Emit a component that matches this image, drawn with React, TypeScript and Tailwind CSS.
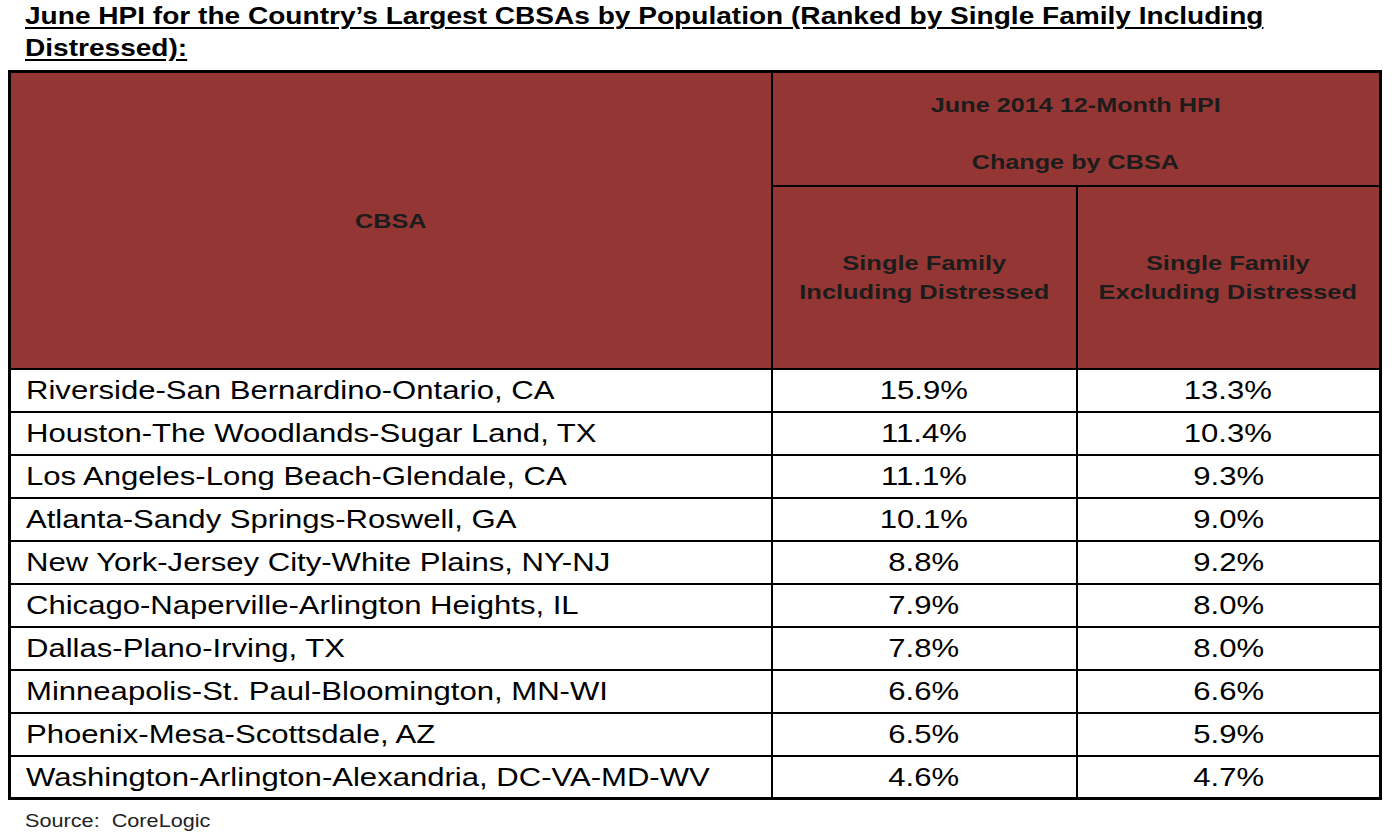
const rows: [string, string, string][] = [
  ['Riverside-San Bernardino-Ontario, CA', '15.9%', '13.3%'],
  ['Houston-The Woodlands-Sugar Land, TX', '11.4%', '10.3%'],
  ['Los Angeles-Long Beach-Glendale, CA', '11.1%', '9.3%'],
  ['Atlanta-Sandy Springs-Roswell, GA', '10.1%', '9.0%'],
  ['New York-Jersey City-White Plains, NY-NJ', '8.8%', '9.2%'],
  ['Chicago-Naperville-Arlington Heights, IL', '7.9%', '8.0%'],
  ['Dallas-Plano-Irving, TX', '7.8%', '8.0%'],
  ['Minneapolis-St. Paul-Bloomington, MN-WI', '6.6%', '6.6%'],
  ['Phoenix-Mesa-Scottsdale, AZ', '6.5%', '5.9%'],
  ['Washington-Arlington-Alexandria, DC-VA-MD-WV', '4.6%', '4.7%'],
];

// the source image is stretched sideways, so text gets a horizontal scale
export default function App() {
  return (
    <div className="w-[1398px] h-[838px] bg-white pl-[8px] font-['Liberation_Sans',Arial,sans-serif] text-black overflow-hidden">
      <h1 className="pl-[17px] text-[23px] leading-[32px] font-bold whitespace-nowrap">
        <span className="inline-block origin-left scale-x-[1.22] underline decoration-2 underline-offset-[3px]">
          June HPI for the Country’s Largest CBSAs by Population (Ranked by Single Family Including
          <br />
          Distressed):
        </span>
      </h1>

      <table className="mt-[6px] w-[1374px] border-collapse border-[3px] border-black">
        <thead className="bg-[#943634] text-[#1c1c1c] font-bold text-[21px]">
          <tr className="h-[114px]">
            <th rowSpan={2} className="w-[762px] border-2 border-black font-bold">
              <span className="inline-block scale-x-[1.2]">CBSA</span>
            </th>
            <th colSpan={2} className="border-2 border-black font-bold leading-[24px]">
              <div className="pt-[10px]">
                <span className="inline-block scale-x-[1.2]">June 2014 12-Month HPI</span>
              </div>
              <div className="mt-[33px]">
                <span className="inline-block scale-x-[1.2]">Change by CBSA</span>
              </div>
            </th>
          </tr>
          <tr className="h-[183px]">
            <th className="w-[305px] border-2 border-black font-bold leading-[29px]">
              <span className="inline-block scale-x-[1.21]">
                Single Family
                <br />
                Including Distressed
              </span>
            </th>
            <th className="border-2 border-black font-bold leading-[29px]">
              <span className="inline-block scale-x-[1.21]">
                Single Family
                <br />
                Excluding Distressed
              </span>
            </th>
          </tr>
        </thead>
        <tbody className="text-[26px]">
          {rows.map(([name, incl, excl]) => (
            <tr key={name} className="h-[43px]">
              <td className="border-2 border-black pl-[15px] leading-[30px] whitespace-nowrap">
                <span className="inline-block origin-left scale-x-[1.195]">{name}</span>
              </td>
              <td className="border-2 border-black text-center leading-[30px]">
                <span className="inline-block scale-x-[1.195]">{incl}</span>
              </td>
              <td className="border-2 border-black text-center leading-[30px]">
                <span className="inline-block scale-x-[1.195]">{excl}</span>
              </td>
            </tr>
          ))}
        </tbody>
      </table>

      <p className="mt-[9px] pl-[17px] text-[19px] leading-[24px] text-[#222]">
        <span className="inline-block origin-left scale-x-[1.14]">Source:&nbsp; CoreLogic</span>
      </p>
    </div>
  );
}
